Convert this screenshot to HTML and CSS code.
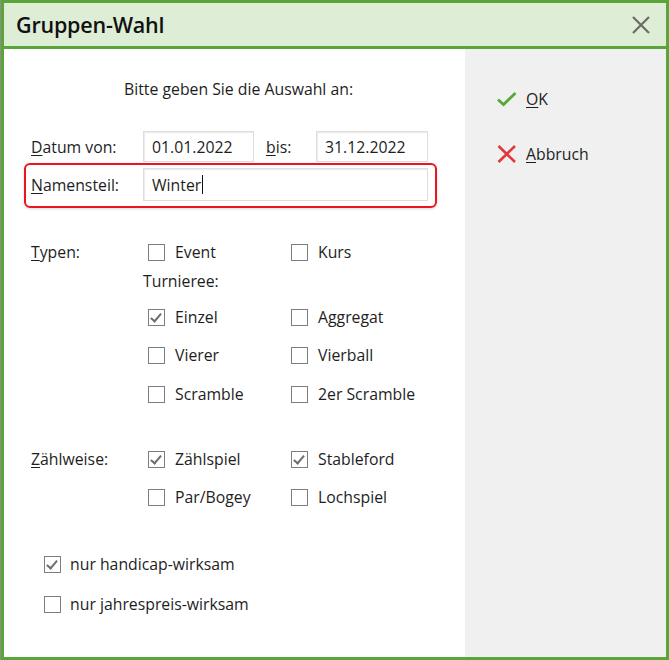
FILE: index.html
```html
<!DOCTYPE html>
<html lang="de">
<head>
    <meta charset="UTF-8">
    <title>Gruppen-Wahl</title>
    <link rel="stylesheet" href="styles.css">
</head>
<body>
    <div class="window">
        <div class="titlebar">
            <span class="title">Gruppen-Wahl</span>
            <svg class="close" width="20" height="20" viewBox="0 0 20 20">
                <path d="M2 2 L18 18 M18 2 L2 18" stroke="#6b6b6b" stroke-width="2.2" fill="none"/>
            </svg>
        </div>
        <div class="body">
            <div class="main">
                <p class="intro">Bitte geben Sie die Auswahl an:</p>

                <div class="date-row">
                    <span class="label"><u>D</u>atum von:</span>
                    <div class="input">01.01.2022</div>
                    <span class="label bis"><u>b</u>is:</span>
                    <div class="input">31.12.2022</div>
                </div>

                <div class="name-frame">
                    <span class="label"><u>N</u>amensteil:</span>
                    <div class="input wide">Winter<span class="caret"></span></div>
                </div>

                <div class="section types">
                    <div class="row">
                        <span class="label"><u>T</u>ypen:</span>
                        <label class="check"><span class="box"></span>Event</label>
                        <label class="check"><span class="box"></span>Kurs</label>
                    </div>
                    <div class="row sub">
                        <span></span>
                        <span class="sub-title">Turnieree:</span>
                    </div>
                    <div class="row">
                        <span></span>
                        <label class="check"><span class="box checked"></span>Einzel</label>
                        <label class="check"><span class="box"></span>Aggregat</label>
                    </div>
                    <div class="row">
                        <span></span>
                        <label class="check"><span class="box"></span>Vierer</label>
                        <label class="check"><span class="box"></span>Vierball</label>
                    </div>
                    <div class="row">
                        <span></span>
                        <label class="check"><span class="box"></span>Scramble</label>
                        <label class="check"><span class="box"></span>2er Scramble</label>
                    </div>
                </div>

                <div class="section scoring">
                    <div class="row">
                        <span class="label"><u>Z</u>ählweise:</span>
                        <label class="check"><span class="box checked"></span>Zählspiel</label>
                        <label class="check"><span class="box checked"></span>Stableford</label>
                    </div>
                    <div class="row">
                        <span></span>
                        <label class="check"><span class="box"></span>Par/Bogey</label>
                        <label class="check"><span class="box"></span>Lochspiel</label>
                    </div>
                </div>

                <div class="section options">
                    <label class="check option"><span class="box checked"></span>nur handicap-wirksam</label>
                    <label class="check option"><span class="box"></span>nur jahrespreis-wirksam</label>
                </div>
            </div>

            <div class="side">
                <div class="action">
                    <svg width="22" height="16" viewBox="0 0 22 16">
                        <path d="M2 8.5 L7.5 13.5 L19.5 2" stroke="#5aa834" stroke-width="2.8" fill="none"/>
                    </svg>
                    <span><u>O</u>K</span>
                </div>
                <div class="action">
                    <svg width="22" height="18" viewBox="0 0 22 18">
                        <path d="M2.5 1 L19 17 M19 1 L2.5 17" stroke="#e0383b" stroke-width="2.6" fill="none"/>
                    </svg>
                    <span><u>A</u>bbruch</span>
                </div>
            </div>
        </div>
    </div>
</body>
</html>
```

FILE: styles.css
```css
body {
    margin: 0;
    padding: 0;
    background-color: #8c8c8c;
    font-family: "Open Sans", "Liberation Sans", sans-serif;
    font-size: 15.8px;
    color: #1e1e1e;
}
u {
    text-decoration-thickness: 1px;
    text-underline-offset: 2px;
}
.window {
    width: 668px;
    height: 660px;
    margin-left: 1px;
    box-sizing: border-box;
    border: 3px solid #5ba538;
    display: flex;
    flex-direction: column;
    background-color: #fff;
}
.titlebar {
    height: 43px;
    background-color: #deedd5;
    border-bottom: 3px solid #5ba538;
    display: flex;
    align-items: center;
    justify-content: space-between;
    padding: 0 15px 0 12px;
}
.title {
    font-size: 21.5px;
    font-weight: 600;
    color: #111;
    letter-spacing: -0.2px;
}
.close {
    margin-top: 1px;
}
.body {
    flex: 1;
    display: flex;
}
.main {
    width: 434px;
    padding-left: 27px;
    background-color: #fff;
}
.side {
    flex: 1;
    background-color: #f0f0f0;
    padding: 35px 0 0 31px;
    display: flex;
    flex-direction: column;
    gap: 25px;
}
.action {
    height: 30px;
    display: flex;
    align-items: center;
    gap: 8px;
}
.intro {
    margin: 30px 0 0 0;
    line-height: 20px;
    padding-left: 93px;
}
.label {
    line-height: 20px;
}
.date-row {
    margin-top: 32px;
    display: grid;
    grid-template-columns: 112px 111px 62px 112px;
    align-items: center;
}
.date-row .bis {
    padding-left: 12px;
}
.input {
    height: 31px;
    box-sizing: border-box;
    border: 1px solid #dedede;
    box-shadow: inset 1px 1px 1px #ececec;
    background-color: #fff;
    padding-left: 8px;
    display: flex;
    align-items: center;
    line-height: 20px;
}
.name-frame {
    margin: 1px 0 0 -7px;
    width: 413px;
    box-sizing: border-box;
    border: 2px solid #e8161e;
    border-radius: 6px;
    padding: 3px 7px 5px 5px;
    display: grid;
    grid-template-columns: 112px 1fr;
    align-items: center;
    box-shadow: 0 1px 3px rgba(0, 0, 0, 0.15);
}
.input.wide {
    height: 33px;
}
.caret {
    display: inline-block;
    width: 1px;
    height: 19px;
    background-color: #111;
    margin-left: 1px;
}
.section .row {
    display: grid;
    grid-template-columns: 117px 143px 1fr;
    align-items: center;
    height: 38px;
}
.types {
    margin-top: 25px;
}
.types .row.sub {
    height: 20px;
    margin-bottom: 7px;
}
.types .row:last-child {
    margin-top: 1px;
}
.sub-title {
    margin-left: -5px;
    line-height: 20px;
}
.scoring {
    margin-top: 27px;
}
.options {
    margin-top: 28px;
    padding-left: 13px;
    display: flex;
    flex-direction: column;
}
.check {
    display: flex;
    align-items: center;
    gap: 10px;
    line-height: 20px;
}
.check.option {
    height: 40px;
    gap: 9px;
}
.box {
    width: 17px;
    height: 17px;
    box-sizing: border-box;
    border: 1px solid #7d7d7d;
    background-color: #fff;
    position: relative;
}
.box.checked::after {
    content: "";
    position: absolute;
    left: 4px;
    top: 1px;
    width: 4px;
    height: 9px;
    border-right: 2px solid #6e6e6e;
    border-bottom: 2px solid #6e6e6e;
    transform: rotate(40deg);
}
```
